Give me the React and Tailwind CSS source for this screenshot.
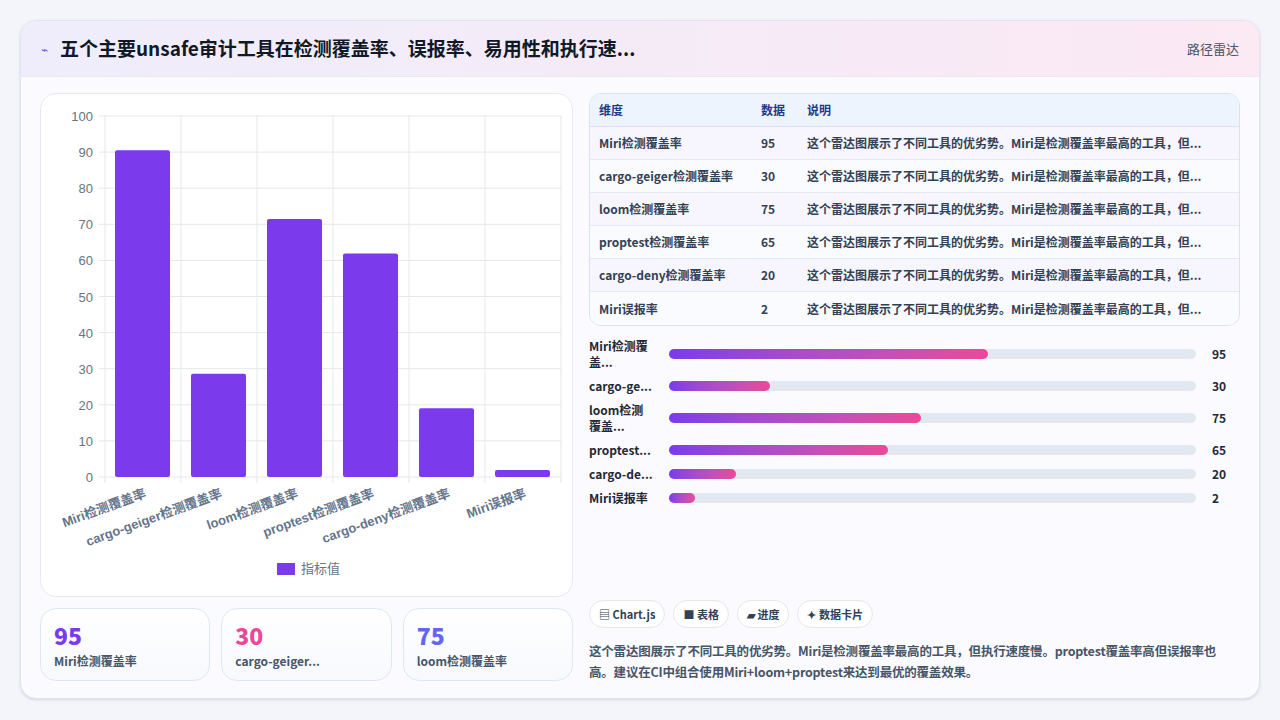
import React from 'react';

const rows = [
  { name: 'Miri检测覆盖率', short: 'Miri检测覆盖...', v: 95 },
  { name: 'cargo-geiger检测覆盖率', short: 'cargo-ge...', v: 30 },
  { name: 'loom检测覆盖率', short: 'loom检测覆盖...', v: 75 },
  { name: 'proptest检测覆盖率', short: 'proptest...', v: 65 },
  { name: 'cargo-deny检测覆盖率', short: 'cargo-de...', v: 20 },
  { name: 'Miri误报率', short: 'Miri误报率', v: 2 },
];

const desc = '这个雷达图展示了不同工具的优劣势。Miri是检测覆盖率最高的工具，但...';

const BarChart = () => {
  const x0 = 64, y0 = 383, top = 22, colW = 76;
  const yFor = (v) => y0 - (v / 100) * (y0 - top);
  return (
    <svg width="533" height="500" viewBox="0 0 533 500" style={{ fontFamily: '"Liberation Sans", "Noto Sans CJK SC", sans-serif' }}>
      {[0, 10, 20, 30, 40, 50, 60, 70, 80, 90, 100].map((t) => (
        <g key={t}>
          <line x1={x0 - 6} x2={x0 + colW * 6} y1={yFor(t)} y2={yFor(t)} stroke="#e5e7eb" />
          <text x={x0 - 12} y={yFor(t) + 5} textAnchor="end" fontSize="13" fill="#6b7280">{t}</text>
        </g>
      ))}
      {[0, 1, 2, 3, 4, 5, 6].map((i) => (
        <line key={i} x1={x0 + colW * i} x2={x0 + colW * i} y1={top} y2={y0 + 6} stroke="#e5e7eb" />
      ))}
      {rows.map((r, i) => (
        <g key={r.name}>
          <rect x={x0 + colW * i + 10} y={yFor(r.v * 0.953)} width="55" height={y0 - yFor(r.v * 0.953)} rx="2" fill="#7c3aed" />
          <text
            transform={`translate(${x0 + colW * i + 42},${y0 + 20}) rotate(-20)`}
            textAnchor="end"
            fontSize="13"
            fontWeight="bold"
            fill="#64748b"
          >
            {r.name}
          </text>
        </g>
      ))}
      <rect x="236" y="469" width="18" height="12" fill="#7c3aed" />
      <text x="260" y="479" fontSize="13" fill="#64748b">指标值</text>
    </svg>
  );
};

export default function App() {
  const cards = [
    { v: 95, label: 'Miri检测覆盖率', c: 'text-[#7c3aed]' },
    { v: 30, label: 'cargo-geiger...', c: 'text-[#ec4899]' },
    { v: 75, label: 'loom检测覆盖率', c: 'text-[#6366f1]' },
  ];
  return (
    <div className="w-[1280px] h-[720px] bg-[#f4f5fb] p-5" style={{ fontFamily: '"Noto Sans CJK SC", "Noto Sans", sans-serif' }}>
      <div className="h-[679px] bg-[#fbfbff] rounded-2xl border border-[#e3e3f0] shadow-sm overflow-hidden flex flex-col">
        <div className="h-[56px] shrink-0 flex items-center justify-between px-5 bg-gradient-to-r from-[#efedfc] to-[#fbe9f3] border-b border-[#ebe7f5]">
          <div className="flex items-center gap-3">
            <span className="text-[#6366f1] text-xs">⌁</span>
            <h1 className="text-[19px] font-bold text-[#111827]">五个主要unsafe审计工具在检测覆盖率、误报率、易用性和执行速...</h1>
          </div>
          <span className="text-[13px] text-[#4b5563]">路径雷达</span>
        </div>
        <div className="flex-1 flex gap-4 px-[19px] pt-4 pb-4">
          <div className="w-[533px] flex flex-col gap-[11px]">
            <div className="h-[504px] bg-white rounded-2xl border border-[#e5e9f2] overflow-hidden">
              <BarChart />
            </div>
            <div className="grid grid-cols-3 gap-[11px]">
              {cards.map((c) => (
                <div key={c.v} className="h-[73px] rounded-2xl border border-[#dfe7f3] bg-gradient-to-b from-white to-[#f7f9fd] px-[13px] pt-3">
                  <div className={`text-[23px] leading-7 font-extrabold ${c.c}`}>{c.v}</div>
                  <div className="text-xs font-bold text-[#475569] mt-1">{c.label}</div>
                </div>
              ))}
            </div>
          </div>
          <div className="flex-1 flex flex-col">
            <div className="rounded-xl border border-[#d9e2ee] overflow-hidden bg-white">
              <div className="flex h-[33px] items-center bg-[#eef4fe] border-b border-[#d9e2ee] text-xs font-bold text-[#1e3a8a]">
                <div className="w-[171px] pl-[9px]">维度</div>
                <div className="w-[46px]">数据</div>
                <div>说明</div>
              </div>
              {rows.map((r, i) => (
                <div key={r.name} className={`flex h-[33px] items-center text-xs font-bold text-[#334155] ${i % 2 ? 'bg-[#fafbff]' : 'bg-[#f7f6fe]'} ${i < 5 ? 'border-b border-[#e5e9f2]' : ''}`}>
                  <div className="w-[171px] pl-[9px]">{r.name}</div>
                  <div className="w-[46px]">{r.v}</div>
                  <div>{desc}</div>
                </div>
              ))}
            </div>
            <div className="mt-3 flex flex-col gap-[8px]">
              {rows.map((r) => (
                <div key={r.name} className="flex items-center gap-4 text-xs font-bold text-[#1f2937]">
                  <div className="w-[64px] leading-4 break-all">{r.short}</div>
                  <div className="flex-1 h-[10px] rounded-full bg-[#e2e8f0]">
                    <div className="h-full rounded-full bg-gradient-to-r from-[#7c3aed] to-[#ec4899]" style={{ width: `${Math.max(r.v * 0.638, 5)}%` }} />
                  </div>
                  <div className="w-[28px]">{r.v}</div>
                </div>
              ))}
            </div>
            <div className="mt-auto">
              <div className="flex gap-2 mb-3">
                {['▤ Chart.js', '■ 表格', '▰ 进度', '✦ 数据卡片'].map((t) => (
                  <span key={t} className="h-[28px] px-[9px] flex items-center rounded-full border border-[#e5e7eb] bg-white text-[11px] font-bold text-[#334155]">{t}</span>
                ))}
              </div>
              <p className="text-[12.5px] leading-[21px] font-bold text-[#475569] tracking-[-0.2px]">
                这个雷达图展示了不同工具的优劣势。Miri是检测覆盖率最高的工具，但执行速度慢。proptest覆盖率高但误报率也高。建议在CI中组合使用Miri+loom+proptest来达到最优的覆盖效果。
              </p>
            </div>
          </div>
        </div>
      </div>
    </div>
  );
}
